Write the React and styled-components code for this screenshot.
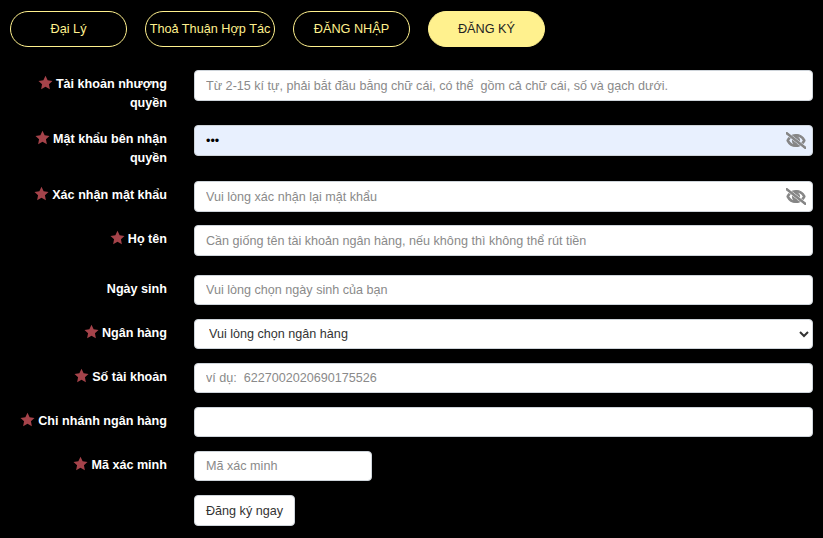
import React from "react"
import styled, {createGlobalStyle} from "styled-components"
import {FaRegEyeSlash} from "react-icons/fa"

const GlobalStyle = createGlobalStyle`
  html, body {
    margin: 0;
    background: #000;
    font-family: "Liberation Sans", Arial, sans-serif;
  }
`

const tabs = [
  {label: "Đại Lý", width: 117},
  {label: "Thoả Thuận Hợp Tác", width: 130},
  {label: "ĐĂNG NHẬP", width: 117},
  {label: "ĐĂNG KÝ", width: 117, active: true},
]

const fields = [
  {label: "Tài khoản nhượng quyền", required: true, gap: 12, placeholder: "Từ 2-15 kí tự, phải bắt đầu bằng chữ cái, có thể  gồm cả chữ cái, số và gạch dưới."},
  {label: "Mật khẩu bên nhận quyền", required: true, gap: 13, password: true, value: "abc", autofill: true},
  {label: "Xác nhận mật khẩu", required: true, gap: 13, password: true, placeholder: "Vui lòng xác nhận lại mật khẩu"},
  {label: "Họ tên", required: true, gap: 19, placeholder: "Cần giống tên tài khoản ngân hàng, nếu không thì không thể rút tiền"},
  {label: "Ngày sinh", gap: 14, compact: true, placeholder: "Vui lòng chọn ngày sinh của bạn"},
  {label: "Ngân hàng", required: true, gap: 14, compact: true, select: true},
  {label: "Số tài khoản", required: true, gap: 14, compact: true, placeholder: "ví dụ:  6227002020690175526"},
  {label: "Chi nhánh ngân hàng", required: true, gap: 14, compact: true},
  {label: "Mã xác minh", required: true, gap: 14, compact: true, short: true, placeholder: "Mã xác minh"},
]

const Star = () => (
  <StarIcon viewBox="0 0 24 24" aria-hidden="true">
    <path d="M12 1.2l3.4 7.2 7.8 1-5.7 5.4 1.5 7.8L12 18.8l-7 3.8 1.5-7.8L.8 9.4l7.8-1z"/>
  </StarIcon>
)

const App = () => {
  return (
    <Page>
      <GlobalStyle/>
      <TabBar>
        {tabs.map(item =>
          <Tab key={item.label} $width={item.width} $active={item.active}>{item.label}</Tab>
        )}
      </TabBar>
      <Form>
        {fields.map(item =>
          <Row key={item.label} $gap={item.gap}>
            <Label>
              {item.required && <Star/>}
              {item.label}
            </Label>
            <Control $short={item.short}>
              {item.select ? (
                <Select defaultValue="">
                  <option value="">Vui lòng chọn ngân hàng</option>
                </Select>
              ) : (
                <Input
                  type={item.password ? "password" : "text"}
                  placeholder={item.placeholder}
                  defaultValue={item.value}
                  $autofill={item.autofill}
                  $compact={item.compact}
                />
              )}
              {item.password && <EyeIcon/>}
            </Control>
          </Row>
        )}
        <Row $gap={0}>
          <Label/>
          <SubmitButton>Đăng ký ngay</SubmitButton>
        </Row>
      </Form>
    </Page>
  )
}

const Page = styled.div`
  width: 823px;
  height: 538px;
  overflow: hidden;
  background: #000;
`

const TabBar = styled.div`
  display: flex;
  gap: 18px;
  padding: 11px 10px 0;
`

const Tab = styled.button`
  width: ${props => props.$width}px;
  height: 36px;
  padding: 0;
  border: 1px solid #fff18e;
  border-radius: 18px;
  font-family: inherit;
  font-size: 12.7px;
  white-space: nowrap;
  color: ${props => (props.$active ? "#222" : "#fff18e")};
  background: ${props => (props.$active ? "#fff18e" : "transparent")};
`

const Form = styled.div`
  padding-top: 23px;
`

const Row = styled.div`
  display: flex;
  align-items: flex-start;
  gap: 27px;
  margin-bottom: ${props => props.$gap}px;
`

const Label = styled.div`
  width: 167px;
  padding-top: 5px;
  box-sizing: border-box;
  font-size: 12.6px;
  font-weight: 700;
  line-height: 19px;
  text-align: right;
  color: #fff;
`

const StarIcon = styled.svg`
  width: 15px;
  height: 15px;
  margin-right: 3px;
  vertical-align: -2px;
  fill: #a5434a;
`

const Control = styled.div`
  position: relative;
  width: ${props => (props.$short ? "178px" : "619px")};
`

const Input = styled.input`
  display: block;
  width: 100%;
  height: ${props => (props.$compact ? "30px" : "31px")};
  box-sizing: border-box;
  padding: 0 11px;
  border: 1px solid #ced4da;
  border-radius: 4px;
  outline: 0;
  font-family: inherit;
  font-size: 12.6px;
  color: #000;
  background: ${props => (props.$autofill ? "#e8f0fe" : "#fff")};

  &::placeholder {
    color: #8a8a8a;
    opacity: 1;
  }
`

const Select = styled.select`
  display: block;
  width: 100%;
  height: 30px;
  box-sizing: border-box;
  padding: 0 10px;
  border: 1px solid #ced4da;
  border-radius: 4px;
  outline: 0;
  font-family: inherit;
  font-size: 12.6px;
  color: #333;
  background: #fff;
`

const EyeIcon = styled(FaRegEyeSlash)`
  position: absolute;
  top: 7px;
  right: 7px;
  width: 20px;
  height: 17px;
  color: #858585;
  stroke: #858585;
  stroke-width: 36px;
`

const SubmitButton = styled.button`
  width: 101px;
  height: 31px;
  padding: 0;
  border: 1px solid #ced4da;
  border-radius: 4px;
  font-family: inherit;
  font-size: 12.6px;
  color: #333;
  background: #fff;
`

export default App
